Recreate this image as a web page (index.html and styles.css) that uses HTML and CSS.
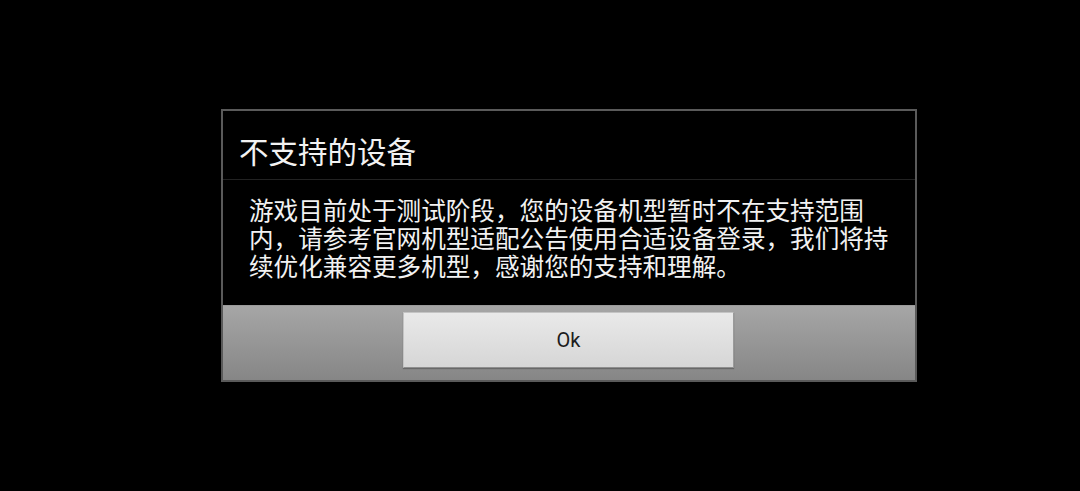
FILE: index.html
```html
<!DOCTYPE html>
<html>
<head>
<meta charset="utf-8">
<link rel="stylesheet" href="styles.css">
</head>
<body>
<div class="screen">
  <div class="dialog">
    <div class="title">不支持的设备</div>
    <div class="message">
      <div class="line">游戏目前处于测试阶段，您的设备机型暂时不在支持范围</div>
      <div class="line">内，请参考官网机型适配公告使用合适设备登录，我们将持</div>
      <div class="line">续优化兼容更多机型，感谢您的支持和理解。</div>
    </div>
    <div class="buttons">
      <button class="btn">Ok</button>
    </div>
  </div>
</div>
</body>
</html>
```
FILE: styles.css
```css
html, body {
  margin: 0;
  padding: 0;
  background: #000;
  width: 1080px;
  height: 491px;
  overflow: hidden;
}
.screen {
  padding: 109px 0 0 221px;
}
.dialog {
  width: 692px;
  border: 2px solid #5a5a5a;
  background: #000;
  display: flex;
  flex-direction: column;
}
.title {
  height: 69px;
  box-sizing: border-box;
  padding: 20px 0 0 16px;
  font-family: "Noto Sans CJK SC", "Noto Sans", sans-serif;
  font-size: 29.5px;
  line-height: 38px;
  color: #f2f2f2;
  border-bottom: 1px solid #222;
}
.message {
  height: 125px;
  box-sizing: border-box;
  padding: 15px 0 0 26px;
  font-family: "Noto Sans CJK SC", "Noto Sans", sans-serif;
  font-size: 24.6px;
  color: #f2f2f2;
  white-space: nowrap;
}
.line {
  height: 28px;
  line-height: 28px;
}
.buttons {
  height: 75px;
  box-sizing: border-box;
  background: linear-gradient(#a6a6a6, #868686);
  border-top: 1px solid #9a9a9a;
  display: flex;
  justify-content: center;
  padding-top: 6px;
}
.btn {
  width: 331px;
  height: 56px;
  margin-left: -1px;
  border: 1px solid #c4c4c4;
  border-bottom-color: #8e8e8e;
  border-right-color: #9a9a9a;
  background: linear-gradient(#e9e9e9, #d6d6d6);
  box-shadow: 0 1px 1px rgba(0,0,0,0.25);
  font-family: Roboto, "Noto Sans", sans-serif;
  font-size: 20px;
  color: #1c1c1c;
  padding: 0;
}
```
